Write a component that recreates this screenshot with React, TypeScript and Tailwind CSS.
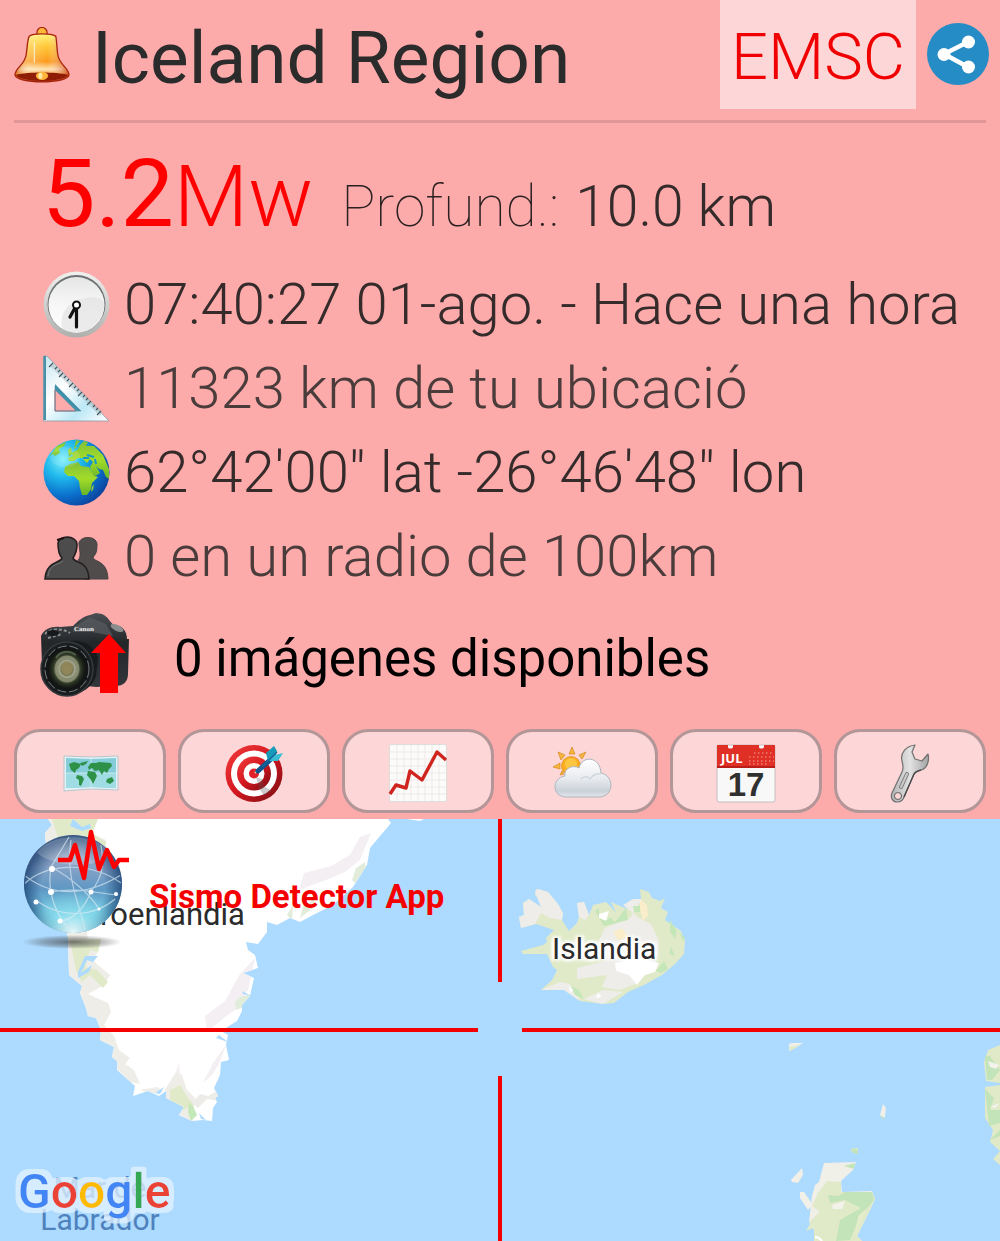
import React from "react";

function BellIcon() {
  return (
    <svg viewBox="0 0 55 55" className="h-14 w-14 shrink-0" aria-hidden="true">
      <defs>
        <linearGradient id="bellBody" x1="0" y1="0" x2="0" y2="1">
          <stop offset="0" stopColor="#fff27a" />
          <stop offset=".25" stopColor="#ffc936" />
          <stop offset=".58" stopColor="#fb9a1c" />
          <stop offset=".74" stopColor="#ffe3b0" />
          <stop offset=".88" stopColor="#f08a1d" />
          <stop offset="1" stopColor="#a52a05" />
        </linearGradient>
        <linearGradient id="bellSide" x1="0" y1="0" x2="1" y2="0">
          <stop offset="0" stopColor="#d35400" stopOpacity=".7" />
          <stop offset=".25" stopColor="#fff" stopOpacity=".25" />
          <stop offset=".6" stopColor="#fff" stopOpacity="0" />
          <stop offset="1" stopColor="#c8380a" stopOpacity=".8" />
        </linearGradient>
      </defs>
      <circle cx="27.500" cy="5.500" r="5" fill="#ffb73a" stroke="#a8240c" strokeWidth="1.200" />
      <path d="M15 9C19 6 36 6 41 9C42 13 42 21 43 27C44 37 54 40 54 47C54 56 1 56 1 47C1 40 11 37 12 27C13 21 13 13 15 9Z" fill="url(#bellBody)" />
      <path d="M15 9C19 6 36 6 41 9C42 13 42 21 43 27C44 37 54 40 54 47C54 56 1 56 1 47C1 40 11 37 12 27C13 21 13 13 15 9Z" fill="url(#bellSide)" stroke="#a8240c" strokeWidth="1.300" />
      <path d="M2 47C14 44 41 44 53 47C51 55 4 55 2 47Z" fill="#8f1d06" />
      <ellipse cx="27.500" cy="48" rx="6" ry="4" fill="#ffb338" />
      <ellipse cx="26" cy="48" rx="2" ry="3" fill="#ffe9a8" />
      <path d="M20 15V35" stroke="#fff" strokeWidth="1.300" opacity=".65" />
    </svg>
  );
}

function ShareIcon() {
  return (
    <svg viewBox="0 0 62 62" className="h-full w-full" aria-hidden="true">
      <circle cx="31" cy="31" r="31" fill="#258cc6" />
      <path d="M41 19L17 31L41 44" fill="none" stroke="#fff" strokeWidth="4.500" />
      <circle cx="41.500" cy="19" r="6.500" fill="#fff" />
      <circle cx="17" cy="31.500" r="6.500" fill="#fff" />
      <circle cx="41.500" cy="44" r="6.500" fill="#fff" />
    </svg>
  );
}

function ClockIcon() {
  return (
    <svg viewBox="0 0 67 67" className="h-full w-full" aria-hidden="true">
      <defs>
        <linearGradient id="clockRim" x1="0" y1="0" x2="0" y2="1">
          <stop offset="0" stopColor="#f1f1ef" />
          <stop offset="1" stopColor="#aeb0ae" />
        </linearGradient>
        <linearGradient id="clockFace" x1="0" y1="0" x2="0" y2="1">
          <stop offset="0" stopColor="#e6e6e6" />
          <stop offset=".5" stopColor="#f7f7f7" />
          <stop offset="1" stopColor="#fff" />
        </linearGradient>
      </defs>
      <circle cx="33.500" cy="33.500" r="33" fill="url(#clockRim)" />
      <circle cx="33.500" cy="33" r="29" fill="#6d7173" />
      <circle cx="33.500" cy="34" r="28" fill="url(#clockFace)" />
      <path d="M19 58C16 44 24 30 42 27C54 25 60 28 61 32C62 49 48 62 33 62C28 62 23 60 19 58Z" fill="#dcdcdc" opacity=".55" />
      <path d="M33.500 34L27 46M33.500 36V56" stroke="#111" strokeWidth="3.200" strokeLinecap="round" />
      <circle cx="33.500" cy="34" r="3.500" fill="#fff" stroke="#111" strokeWidth="2" />
    </svg>
  );
}

function TriangleIcon() {
  return (
    <svg viewBox="0 0 67 67" className="h-full w-full" aria-hidden="true">
      <defs>
        <linearGradient id="setSquare" x1="0" y1="0" x2="1" y2="1">
          <stop offset="0" stopColor="#c4e7f2" />
          <stop offset=".4" stopColor="#fff" />
          <stop offset=".7" stopColor="#bce8f6" />
          <stop offset="1" stopColor="#fff" />
        </linearGradient>
      </defs>
      <path fillRule="evenodd" d="M.5 1H4L66 66H.5ZM12 31V56H38Z" fill="url(#setSquare)" stroke="#8a9aa3" strokeWidth=".8" />
      <path d="M.5 1H3V65H.5Z" fill="#4a91a8" />
      <path d="M12 29L38 56H33L12 35Z" fill="#3f90a9" />
      <path d="M12 35V56H33" fill="none" stroke="#7d7282" strokeWidth="1" />
      <path d="M11 9L59 57L57 61L7 11Z" fill="#a8bcc1" opacity=".55" />
      <path d="M10 8L6 12M14 12L12 14M17 15L15 17M20 18L16 22M23 21L21 23M26 24L24 26M30 28L26 32M33 31L31 33M36 34L34 36M39 37L35 41M42 40L40 42M45 43L43 45M48 46L44 50M52 50L50 52M55 53L53 55M58 56L54 60" stroke="#42545c" strokeWidth="1.100" />
    </svg>
  );
}

function GlobeIcon() {
  return (
    <svg viewBox="0 0 67 67" className="h-full w-full" aria-hidden="true">
      <defs>
        <radialGradient id="globeSea" cx=".3" cy=".3" r=".8">
          <stop offset="0" stopColor="#7df0fb" />
          <stop offset=".35" stopColor="#1fb8ec" />
          <stop offset=".7" stopColor="#0a6ecb" />
          <stop offset="1" stopColor="#0b3f98" />
        </radialGradient>
        <linearGradient id="globeLand" x1="0" y1="0" x2="0" y2="1">
          <stop offset="0" stopColor="#7fbf3a" />
          <stop offset=".5" stopColor="#a3dc28" />
          <stop offset="1" stopColor="#67b52a" />
        </linearGradient>
        <clipPath id="globeClip">
          <circle cx="33.500" cy="33.500" r="33" />
        </clipPath>
      </defs>
      <circle cx="33.500" cy="33.500" r="33" fill="url(#globeSea)" />
      <g clipPath="url(#globeClip)" fill="url(#globeLand)">
        <path d="M7 17L14 7L23 3L21 7L16 10L17 14L12 17L10 15Z" />
        <path d="M33 1L37 2L32 8L35 8L41 2L45 3L43 7L51 7L60 16L66 30V40L63 38L60 31L56 30L53 27L57 34L51 38L48 32L47 28L50 23L47 20L44 24L39 19L35 19L31 22L26 22L25 19L30 17L28 14L34 11L37 7L31 10Z" />
        <path d="M27 25L35 23L38 27L46 28L51 37L55 38L49 44L48 50L44 56L39 56L37 49L36 42L31 37L25 37L21 33L22 28Z" />
        <path d="M49 48L51 45L50 51L48 53Z" />
        <path d="M25 11L28 8L29 15L26 18Z" />
      </g>
      <path d="M40 19H46M44 16L51 18M52 20L53 25" stroke="#1397ce" strokeWidth="2" />
      <ellipse cx="22" cy="18" rx="15" ry="10" fill="#fff" opacity=".12" />
    </svg>
  );
}

function PeopleIcon() {
  return (
    <svg viewBox="0 -4 67 67" className="h-full w-full" aria-hidden="true">
      <path d="M36 16C37 9 53 8 54 17C54 25 53 27 50 30C51 36 64 32 65 52H42L35 33C39 30 36 22 36 16Z" fill="#504c4c" stroke="#464040" strokeWidth="1" />
      <path d="M15 16C16 8 33 8 34 17C34 25 32 28 30 31C31 37 45 32 46 52H2C3 34 18 36 19 31C16 28 15 23 15 16Z" fill="#4c4c4c" stroke="#242020" strokeWidth="1.600" />
      <path d="M5 49C7 36 16 38 20 34" fill="none" stroke="#777" strokeWidth="1" />
      <path d="M14 13L21 11" stroke="#211" strokeWidth="2" />
    </svg>
  );
}

function CameraIcon() {
  return (
    <svg viewBox="0 0 90 86" className="h-[86px] w-[90px] shrink-0" aria-hidden="true">
      <defs>
        <radialGradient id="lensGlass">
          <stop offset="0" stopColor="#8b7a4a" />
          <stop offset=".3" stopColor="#6f7046" />
          <stop offset=".42" stopColor="#a8ab95" />
          <stop offset=".58" stopColor="#4f5a3c" />
          <stop offset=".8" stopColor="#232c1f" />
          <stop offset="1" stopColor="#111" />
        </radialGradient>
        <linearGradient id="cameraBody" x1="0" y1="0" x2="0" y2="1">
          <stop offset="0" stopColor="#4b4f53" />
          <stop offset=".4" stopColor="#24272a" />
          <stop offset="1" stopColor="#33363a" />
        </linearGradient>
      </defs>
      <path d="M1 24C4 17 12 14 20 15L33 14C38 9 42 5 50 3L56 1L62 2C69 5 70 11 74 13C82 13 87 19 87 27L89 27L88 62C88 70 83 74 76 74L56 75L12 70L2 54Z" fill="url(#cameraBody)" />
      <path d="M34 15L50 5L66 12L73 24L52 20L33 20Z" fill="#55595c" opacity=".8" />
      <path d="M5 22C10 16 23 16 30 21M8 26L22 22" fill="none" stroke="#8a8e91" strokeWidth="2" strokeDasharray="3 2" />
      <ellipse cx="77" cy="16" rx="7" ry="3" fill="#8a8d8e" transform="rotate(25 77 16)" />
      <ellipse cx="13" cy="21" rx="6" ry="3" fill="#16181a" />
      <text x="34" y="19" fontFamily="Liberation Serif, serif" fontWeight="700" fontSize="7" fill="#eee">Canon</text>
      <path d="M20 33C34 24 54 30 58 46L56 64C52 77 38 84 26 82Z" fill="#181b1d" />
      <ellipse cx="27" cy="57" rx="26" ry="27" fill="#1b1e20" stroke="#34393b" strokeWidth="1.500" />
      <ellipse cx="27" cy="57" rx="22" ry="23" fill="#131617" stroke="#777d7b" strokeWidth="1" strokeDasharray="9 3" />
      <ellipse cx="27" cy="57" rx="19" ry="20" fill="url(#lensGlass)" />
      <ellipse cx="27" cy="56" rx="6" ry="7" fill="#9a8d62" opacity=".7" />
      <ellipse cx="27" cy="57" rx="11" ry="12" fill="none" stroke="#a8a98e" strokeWidth="3" opacity=".6" />
      <path d="M16 46C20 39 29 38 36 43" fill="none" stroke="#6e8266" strokeWidth="2" opacity=".6" />
      <path d="M69 22L86 41H78V81H60V41H51Z" fill="red" />
    </svg>
  );
}

function WorldMapIcon() {
  return (
    <svg viewBox="0 0 60 60" className="h-15 w-15" aria-hidden="true">
      <path d="M4 13L31 14L58 13V47L31 46L4 48Z" fill="#e4f1f4" stroke="#a8bfc6" strokeWidth=".8" />
      <path d="M6 15L31 16L56 15V45L31 44L6 45Z" fill="#84cdd9" />
      <path d="M6 30H56V45L31 44L6 45Z" fill="#a0dce4" />
      <path d="M31 14V46M4 30H58" stroke="#d3eef2" strokeWidth=".8" />
      <g fill="#2d9148">
        <path d="M9 21L14 19L21 21L19 25L16 27L15 30L11 27Z" />
        <path d="M20 20L28 18L26 21L22 23Z" />
        <path d="M17 32L22 33L24 36L21 43L19 42L19 37L16 35Z" />
        <path d="M28 24L31 20L36 20L39 19L51 20L52 23L49 26L47 30L44 28L42 32L39 27L35 28L32 25L29 27Z" />
        <path d="M28 28L35 29L37 33L33 41L31 37L27 32Z" />
        <path d="M47 36L52 34L54 38L50 41L46 39Z" />
      </g>
    </svg>
  );
}

function TargetIcon() {
  return (
    <svg viewBox="0 0 60 60" className="h-15 w-15" aria-hidden="true">
      <defs>
        <linearGradient id="targetRed" x1="0" y1="0" x2="1" y2="1">
          <stop offset="0" stopColor="#f33b3b" />
          <stop offset=".5" stopColor="#d31820" />
          <stop offset="1" stopColor="#780c12" />
        </linearGradient>
      </defs>
      <circle cx="30" cy="30.500" r="28.500" fill="url(#targetRed)" />
      <circle cx="30" cy="30.500" r="23" fill="#fff" />
      <circle cx="30" cy="30.500" r="17" fill="url(#targetRed)" />
      <circle cx="30" cy="30.500" r="10.500" fill="#fff" />
      <circle cx="30" cy="30.500" r="5" fill="#e22027" />
      <path d="M32 34L38 36L40 43L48 48L40 53L35 45Z" fill="#555" opacity=".3" />
      <path d="M31 30L35 26" stroke="#e8d0a0" strokeWidth="2" />
      <path d="M34 28L46 17" stroke="#12548e" strokeWidth="5" strokeLinecap="round" />
      <path d="M44 18L42 10L50 3L53 8L51 14Z" fill="#169bb8" />
      <path d="M44 18L51 12L59 10L54 18Z" fill="#39bdd2" />
      <path d="M38 24L53 9" stroke="#13699b" strokeWidth="1.600" />
    </svg>
  );
}

function ChartIcon() {
  return (
    <svg viewBox="0 0 60 60" className="h-15 w-15" aria-hidden="true">
      <rect x="1.500" y="1.500" width="57" height="57" rx="2" fill="#fbfbfa" stroke="#ddd" />
      <path d="M2 9H58M2 16H58M2 23H58M2 30H58M2 37H58M2 44H58M2 51H58M9 2V58M16 2V58M23 2V58M30 2V58M37 2V58M44 2V58M51 2V58" stroke="#eee7e6" strokeWidth=".9" />
      <path d="M2 51L8 42L18 45L22 28L34 37L49 9L58 17" fill="none" stroke="#cf251e" strokeWidth="3.400" strokeLinejoin="round" />
    </svg>
  );
}

function WeatherIcon() {
  return (
    <svg viewBox="0 0 60 60" className="h-15 w-15" aria-hidden="true">
      <defs>
        <linearGradient id="cloudFill" x1="0" y1="0" x2="0" y2="1">
          <stop offset="0" stopColor="#fff" />
          <stop offset=".5" stopColor="#e9ecef" />
          <stop offset=".85" stopColor="#cbd1d9" />
          <stop offset="1" stopColor="#e5e8ec" />
        </linearGradient>
      </defs>
      <g fill="#f6b53d" stroke="#d58b20" strokeWidth=".7">
        <path d="M17 11L20 4L23 11ZM27 12L34 9L30 16ZM6 9L13 12L9 17ZM1 24L8 20V26ZM8 32L10 28L12 31Z" />
        <circle cx="19" cy="23" r="9.500" fill="#fbae1f" />
      </g>
      <circle cx="19" cy="21" r="6" fill="#ffd65a" opacity=".6" />
      <path d="M14 54C0 54 -1 35 13 33C11 26 21 21 27 25C30 12 48 13 49 30C63 33 62 54 47 54Z" fill="url(#cloudFill)" stroke="#adb5bf" strokeWidth="1" />
      <path d="M49 31C43 30 40 33 38 36C35 32 31 34 29 36" fill="none" stroke="#ccd2d9" strokeWidth="1.200" />
    </svg>
  );
}

function CalendarIcon() {
  return (
    <svg viewBox="0 0 60 60" className="h-15 w-15" aria-hidden="true">
      <rect x="1" y="2" width="58" height="57" rx="2" fill="#f8f8f8" stroke="#b9b4b4" strokeWidth=".8" />
      <path d="M1 2H12V4C12 6 17 6 17 4V2H43V4C43 6 48 6 48 4V2H59V24H1Z" fill="#e02f24" />
      <path d="M1 23H59V25H1Z" fill="#b91f18" />
      <path d="M38 10H58M33 14H58M33 18H58M33 21H53" stroke="#f4a29c" strokeWidth="1.100" strokeDasharray="1.500 2.500" />
      <text x="5" y="20" fontFamily="Open Sans, sans-serif" fontWeight="700" fontSize="13" fill="#fff">JUL</text>
      <text x="30" y="53" textAnchor="middle" fontFamily="Liberation Sans, sans-serif" fontWeight="700" fontSize="33" fill="#303030">17</text>
    </svg>
  );
}

function WrenchIcon() {
  return (
    <svg viewBox="0 0 60 60" className="h-15 w-15" aria-hidden="true">
      <defs>
        <linearGradient id="wrenchMetal" x1="0" y1="0" x2="1" y2="0">
          <stop offset="0" stopColor="#b4b4b4" />
          <stop offset=".5" stopColor="#e2e2e2" />
          <stop offset="1" stopColor="#a3a3a3" />
        </linearGradient>
      </defs>
      <path fillRule="evenodd" d="M35 2C26 3 20 10 22 18C23 22 24 25 22 29L12 50C10 55 13 59 17 59C21 59 23 57 24 54L34 31C36 28 38 28 41 27C46 26 50 19 48 11L42 18L35 16L32 9ZM18 49.500A3.500 3.500 0 1 1 17.900 49.500Z" fill="url(#wrenchMetal)" stroke="#707070" strokeWidth="1.200" strokeLinejoin="round" />
      <path d="M27 31L21 44" stroke="#777" strokeWidth="4" strokeLinecap="round" />
      <path d="M27 31L21 44" stroke="#c9c9c9" strokeWidth="2.200" strokeLinecap="round" />
      <path d="M24 54L34 31C36 28 38 28 41 27" fill="none" stroke="#4a4a4a" strokeWidth="1.400" />
    </svg>
  );
}

function AppLogo() {
  return (
    <svg viewBox="0 0 110 124" className="h-[124px] w-[110px]" aria-hidden="true">
      <defs>
        <linearGradient id="orb" x1="0" y1="0" x2="0" y2="1">
          <stop offset="0" stopColor="#a9b8cc" />
          <stop offset=".3" stopColor="#8ba3c6" />
          <stop offset=".55" stopColor="#5f98c4" />
          <stop offset=".85" stopColor="#7ad6ea" />
          <stop offset="1" stopColor="#e2f3f8" />
        </linearGradient>
        <radialGradient id="orbEdge" cx=".5" cy=".55">
          <stop offset=".65" stopColor="#1c4678" stopOpacity="0" />
          <stop offset="1" stopColor="#1a3f70" stopOpacity=".75" />
        </radialGradient>
        <radialGradient id="orbFoot" cx=".5" cy="1" r=".45">
          <stop offset="0" stopColor="#eaf8fb" />
          <stop offset=".5" stopColor="#8fe0ee" stopOpacity=".7" />
          <stop offset="1" stopColor="#8fe0ee" stopOpacity="0" />
        </radialGradient>
        <radialGradient id="orbShadow">
          <stop offset="0" stopColor="#333" stopOpacity=".65" />
          <stop offset=".6" stopColor="#444" stopOpacity=".35" />
          <stop offset="1" stopColor="#444" stopOpacity="0" />
        </radialGradient>
        <clipPath id="orbClip">
          <circle cx="54" cy="59" r="48" />
        </clipPath>
      </defs>
      <ellipse cx="53" cy="117" rx="50" ry="7" fill="url(#orbShadow)" />
      <circle cx="54" cy="59" r="49" fill="url(#orb)" />
      <circle cx="54" cy="59" r="49" fill="url(#orbEdge)" />
      <circle cx="54" cy="59" r="49" fill="url(#orbFoot)" />
      <g clipPath="url(#orbClip)" fill="none" stroke="#dcebf5" strokeWidth="1.200" opacity=".65">
        <path d="M5 59C25 40 68 34 102 58M5 50C30 70 62 74 102 50M32 42C28 65 34 85 50 105M32 42C52 52 73 72 80 84M32 42L50 12M52 15C46 55 62 82 66 105M32 67C56 62 76 68 99 70M18 76C43 94 75 92 96 74M72 66C84 53 85 38 82 20M72 66C66 84 52 96 40 96" />
      </g>
      <g fill="#fff">
        <circle cx="33" cy="44" r="3" />
        <circle cx="32" cy="67" r="3" />
        <circle cx="72" cy="67" r="2.500" />
        <circle cx="17" cy="77" r="2.500" />
        <circle cx="41" cy="96" r="2.500" />
        <circle cx="97" cy="69" r="2" />
        <circle cx="80" cy="84" r="1.500" />
      </g>
      <path d="M18 28C30 8 76 6 91 28C80 46 34 42 18 28Z" fill="#fff" opacity=".2" />
      <path d="M39 35H51L56 20L65 53L72 7L80 44L88 25L95 42L100 35H110" fill="none" stroke="red" strokeWidth="4.500" strokeLinejoin="round" />
    </svg>
  );
}

function MapTerrain() {
  return (
    <svg viewBox="0 819 1000 422" preserveAspectRatio="xMidYMid slice" className="absolute inset-0 h-full w-full" aria-hidden="true">
      <defs>
        <clipPath id="greenland">
          <path d="M48 819L52 825L45 833L47 855L58 890L68 938L69 975L82 986L80 993L86 1008L88 1016L96 1018L101 1030L100 1040L114 1047L112 1057L117 1061L117 1070L135 1086L133 1096L148 1091L159 1096L166 1091L166 1098L184 1107L179 1115L192 1121L203 1120L212 1121L213 1108L217 1102L215 1098L218 1096L214 1088L220 1075L221 1062L229 1060L226 1045L228 1035L221 1031L237 1021L242 1011L242 1005L250 996L254 978L243 973L258 968L255 955L248 950L246 942L258 944L267 932L267 922L277 925L290 918L300 922L313 915L333 905L353 887L367 865L370 848L391 823L388 819Z" />
        </clipPath>
      </defs>
      <path d="M398 819L407 819L420 821L424 819Z" fill="#fff" />
      <g clipPath="url(#greenland)">
        <path d="M0 800H450V1200H0Z" fill="#fff" />
        <path d="M40 819H98L92 834L106 840L103 870L85 900L88 945L101 939L98 952L92 960L110 975L104 985L88 994L108 1003L111 1012L104 1025L114 1036L119 1050L130 1058L125 1064L134 1070L140 1084L130 1082L118 1070L108 1048L70 1010ZM140 1090L158 1087L163 1092L150 1094ZM166 1088L176 1072L182 1075L187 1090L195 1098L192 1130L160 1110Z" fill="#eeede7" />
        <path d="M52 819H98L92 833L106 842L102 870L88 839L75 840L60 845ZM70 940L101 939L98 952L90 950L85 967L97 970L108 982L103 988L90 975L82 982L76 970ZM170 1090L180 1085L188 1098L194 1105L183 1110L170 1101Z" fill="#e1eac8" />
        <path d="M188 1112L189 1103L193 1106L197 1115L191 1121Z" fill="#c5e8b8" />
        <path d="M240 974L255 958L248 990L235 1010L225 1017L207 1032L205 1016L225 1001ZM226 1045L213 1063L203 1083L212 1075L219 1064ZM366 845L371 833L360 837L350 855L331 866L304 873L299 890L326 880L345 872L360 860ZM176 1072L179 1063L180 1075Z" fill="#f3eff3" />
        <path d="M208 1096L217 1091L219 1101L207 1099L198 1108L192 1103L200 1094Z" fill="#eeece8" />
        <path d="M235 1002L240 997L252 994L243 1007L236 1010ZM365 862L356 868L352 880L356 884L366 868ZM315 898L303 907L300 918L313 908ZM293 905L287 915L292 920Z" fill="#e2ecda" />
      </g>
      <path d="M78 972L85 956L98 956L93 962L87 960L81 973L92 965L89 972L78 978ZM73 819L82 827L90 824L91 828L82 831L70 826ZM155 1093L164 1087L160 1094ZM219 1035L228 1042L216 1038ZM242 991L251 996L243 994ZM199 1113L206 1120L201 1119Z" fill="#addaff" />

      <path d="M519 917L524 915L523 903L529 899L541 907L540 901L535 895L536 889L548 892L558 904L563 913L562 920L569 931L577 923L579 917L577 903L584 902L589 915L593 905L606 902L610 906L616 913L611 902L627 909L631 902L641 899L640 889L649 892L652 898L660 901L665 898L661 908L668 912L665 920L681 931L685 941L684 954L675 964L662 975L644 985L628 992L614 1003L603 1004L580 1001L564 990L541 990L552 980L557 970L553 967L547 954L523 954L521 951L543 945L547 942L546 938L554 930L536 924L521 928Z" fill="#e1eac8" />
      <path d="M519 917L524 915L523 903L529 899L541 907L535 892L538 889L548 892L558 904L563 913L562 920L550 918L541 913L535 924L521 928ZM579 917L577 903L584 902L589 915L585 920ZM605 928L630 918L642 899L633 899L623 905L639 918L651 924L659 941L657 960L638 983L619 990L602 987L607 975L577 979L577 968L605 961L598 942ZM541 990L560 982L570 984L580 1001L564 990ZM584 999L603 990L623 992L603 1004Z" fill="#eeede9" />
      <path d="M599 914L609 911L606 921L599 918Z" fill="#fff" />
      <path d="M595 911L599 908L599 918L606 921L610 917L615 922L626 908L628 920L612 924L604 926ZM633 906H641V912H634ZM670 920L677 931L675 939L670 932ZM679 932L685 938L683 941ZM656 971L664 961L668 969L661 973ZM571 986L579 990L584 999L575 995ZM671 947L675 956L669 954Z" fill="#c5e6b8" />
      <path d="M640 899L647 905L648 916L643 921L640 910ZM613 932L622 928L628 936L619 941Z" fill="#f9edca" />
      <path d="M615 963L637 958L659 963L655 972L645 975L637 985L629 975L616 971ZM598 993L602 997L596 998ZM569 986L573 990L570 993Z" fill="#fff" />

      <g fill="#f0efe8">
        <path d="M789 1044L792 1043L801 1043L804 1042L797 1047L789 1051Z" />
        <path d="M880 1115L883 1104L886 1108L885 1117L883 1118Z" />
        <path d="M791 1180L802 1168L803 1175L798 1183L792 1182ZM800 1192L804 1192L811 1202L811 1207L808 1210L800 1198Z" />
        <path d="M824 1163L856 1162L853 1170L841 1181L842 1192L872 1191L875 1199L870 1210L857 1236L862 1241H814V1230L809 1222L812 1196L815 1185L819 1182Z" />
      </g>
      <g fill="#e1eac8">
        <path d="M827 1181L841 1182L841 1192L872 1192L875 1199L870 1210L857 1236L862 1241H814V1230L809 1222L820 1212L812 1206L818 1193ZM806 1231L810 1224L813 1228ZM789 1047L800 1045L790 1051ZM851 1149L858 1148V1153L851 1151Z" />
        <path d="M1000 1045L988 1050L984 1062L986 1081L1000 1083V1085L985 1087L985 1118L993 1130L990 1142L1000 1151L993 1159L1000 1165Z" />
      </g>
      <path d="M828 1195L839 1196L845 1192L872 1192L874 1200L859 1218L850 1240L836 1241L840 1220L861 1208L845 1200L830 1203ZM844 1166L855 1163L854 1169ZM851 1148L858 1150L858 1154L853 1153ZM985 1056L990 1056L1000 1070L992 1080L987 1080ZM985 1089L994 1098L990 1110L1000 1110V1123L989 1126ZM880 1115L885 1118L883 1119ZM1000 1130L990 1140L1000 1136Z" fill="#c3e3b8" />
      <path d="M832 1205L845 1201L842 1209L833 1209ZM988 1061L999 1065L996 1069L990 1067ZM990 1107L999 1103L996 1108Z" fill="#f4f2ed" />
      <path d="M858 1216L867 1208L855 1236Z" fill="#e5eccb" />
      <path d="M815 1237Q819 1237 822 1241" fill="none" stroke="#fff" strokeWidth="2" />
    </svg>
  );
}

function GoogleLogo() {
  return (
    <svg viewBox="0 0 180 80" className="absolute top-[342px] left-[10px] h-20 w-[180px]" role="img" aria-label="Google">
      <defs>
        <filter id="halo" x="-10%" y="-20%" width="120%" height="140%">
          <feMorphology in="SourceAlpha" operator="dilate" radius="5" result="grown" />
          <feGaussianBlur in="grown" stdDeviation="1" result="soft" />
          <feComponentTransfer in="soft" result="solid">
            <feFuncA type="linear" slope="3" intercept="-1" />
          </feComponentTransfer>
          <feFlood floodColor="#e3f2fe" floodOpacity=".75" />
          <feComposite in2="solid" operator="in" result="glow" />
          <feMerge>
            <feMergeNode in="glow" />
            <feMergeNode in="SourceGraphic" />
          </feMerge>
        </filter>
      </defs>
      <text x="8" y="47" fontFamily="Roboto, sans-serif" fontWeight="500" fontSize="48" filter="url(#halo)">
        <tspan fill="#4285f4">G</tspan>
        <tspan fill="#ea4335">o</tspan>
        <tspan fill="#fbbc05">o</tspan>
        <tspan fill="#4285f4">g</tspan>
        <tspan fill="#34a853">l</tspan>
        <tspan fill="#ea4335">e</tspan>
      </text>
    </svg>
  );
}

const facts = [
  { icon: <ClockIcon />, text: "07:40:27 01-ago. - Hace una hora", tone: "text-[#362b2b]" },
  { icon: <TriangleIcon />, text: "11323 km de tu ubicació", tone: "text-[#4b3c3c]" },
  { icon: <GlobeIcon />, text: "62°42'00\" lat -26°46'48\" lon", tone: "text-[#362b2b]" },
  { icon: <PeopleIcon />, text: "0 en un radio de 100km", tone: "text-[#4b3c3c]" },
];

const actions = [
  { label: "Mapa", icon: <WorldMapIcon /> },
  { label: "Centrar", icon: <TargetIcon /> },
  { label: "Gráfico", icon: <ChartIcon /> },
  { label: "Tiempo", icon: <WeatherIcon /> },
  { label: "Calendario", icon: <CalendarIcon /> },
  { label: "Ajustes", icon: <WrenchIcon /> },
];

export default function App() {
  return (
    <main className="flex min-h-screen flex-col bg-[#fdaaab] font-[Roboto,sans-serif]">
      <header className="flex items-start pr-[11px] pl-3.5">
        <div className="flex h-[109px] min-w-0 flex-1 items-center gap-[22px]">
          <BellIcon />
          <h1 className="pt-1.5 text-[73px] leading-[84px] whitespace-nowrap text-[#2b2b2b]">Iceland Region</h1>
        </div>
        <button type="button" className="mr-[11px] h-[109px] w-[196px] bg-[#fdd6d7] pt-1.5 text-[65px] leading-[103px] font-light text-[#f00000]">
          EMSC
        </button>
        <button type="button" aria-label="Compartir" className="mt-[23px] size-[62px] rounded-full">
          <ShareIcon />
        </button>
      </header>
      <hr className="mx-3.5 mt-[11px] border-0 border-t-3 border-[#e09597]" />

      <section className="pt-[21px]">
        <div className="flex items-baseline pl-[42px] leading-[100px] whitespace-nowrap">
          <strong className="text-[95px] font-normal text-[#ff0000]">5.2</strong>
          <span className="text-[86px] font-light text-[#ff0000]">Mw</span>
          <span className="ml-7 text-[57px] font-thin text-[#2b2020]">Profund.:</span>
          <span className="ml-4 text-[57px] font-light text-[#362b2b]">10.0 km</span>
        </div>
        <ul className="mt-[5px] pl-[43px]">
          {facts.map((f) => (
            <li key={f.text} className="flex h-[84px] items-center gap-3.5">
              <span className="size-[67px] shrink-0">{f.icon}</span>
              <span className={"text-[58px] leading-[68px] font-light whitespace-nowrap " + f.tone}>{f.text}</span>
            </li>
          ))}
        </ul>
        <div className="mt-3.5 flex items-center gap-11 pl-10">
          <CameraIcon />
          <p className="pt-2 text-[51px] leading-[60px] whitespace-nowrap text-black">0 imágenes disponibles</p>
        </div>
      </section>

      <nav className="mt-[31px] mb-1.5 grid grid-cols-6 gap-3 px-3.5">
        {actions.map((a) => (
          <button
            key={a.label}
            type="button"
            aria-label={a.label}
            className="flex h-[84px] items-center justify-center rounded-[26px] border-3 border-[#b39697] bg-[#fdd6d7] pt-1"
          >
            {a.icon}
          </button>
        ))}
      </nav>

      <section aria-label="Mapa del sismo" className="relative min-h-[420px] flex-1 overflow-hidden bg-[#addaff]">
        <MapTerrain />
        <span className="absolute top-[77px] left-[79px] text-[31px] leading-[38px] text-[#2b2b2b]">Groenlandia</span>
        <span className="absolute top-[111px] left-[552px] text-[30px] leading-[38px] text-[#2b2b2b] [text-shadow:0_0_3px_#fff,0_0_4px_#fff,2px_2px_3px_#fff,-2px_-2px_3px_#fff,-3px_2px_3px_#fff,3px_-2px_3px_#fff]">
          Islandia
        </span>
        <span className="absolute top-[353px] left-10 w-[120px] text-center text-[30px] leading-[32px] whitespace-nowrap text-[#4f82bd]">
          Mar de
          <br />
          Labrador
        </span>
        <div className="absolute top-0 left-1/2 h-[163px] w-1 -translate-x-1/2 bg-[#f50000]" />
        <div className="absolute top-[257px] bottom-0 left-1/2 w-1 -translate-x-1/2 bg-[#f50000]" />
        <div className="absolute top-[209px] right-[calc(50%+22px)] left-0 h-1 bg-[#f50000]" />
        <div className="absolute top-[209px] right-0 left-[calc(50%+22px)] h-1 bg-[#f50000]" />
        <div className="absolute top-[6px] left-[19px] flex items-center gap-5">
          <AppLogo />
          <strong className="pt-5 text-[33px] leading-10 font-bold whitespace-nowrap text-[#f50000]">Sismo Detector App</strong>
        </div>
        <GoogleLogo />
      </section>
    </main>
  );
}
